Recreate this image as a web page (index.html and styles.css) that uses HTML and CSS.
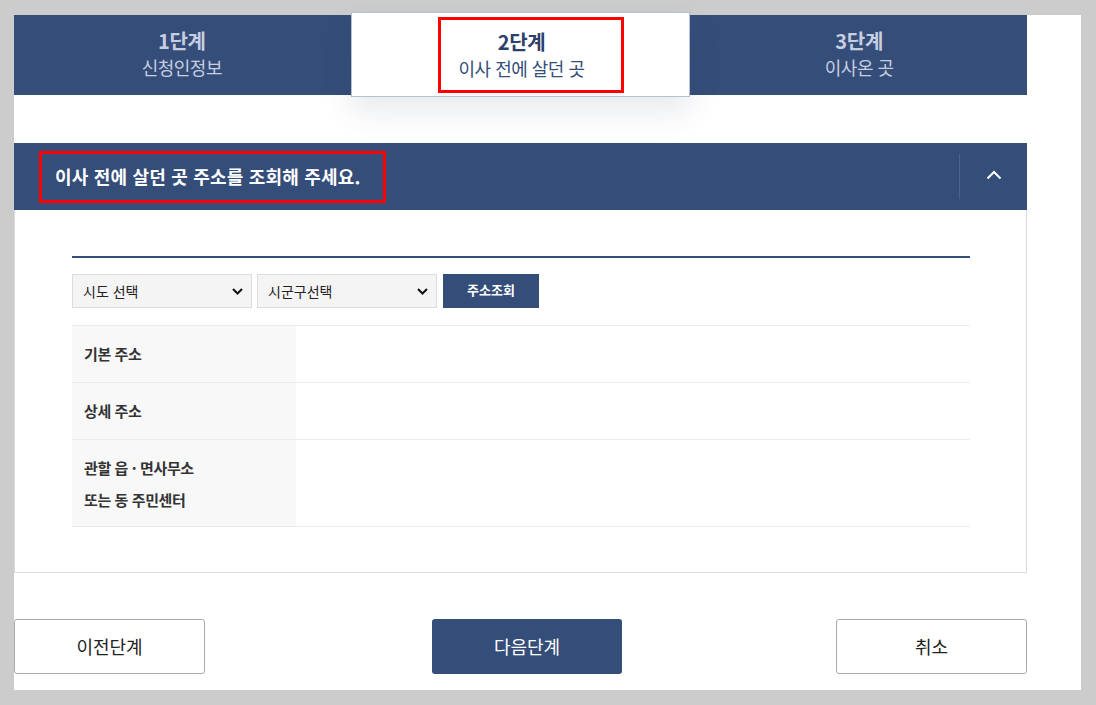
FILE: index.html
```html
<!DOCTYPE html>
<html lang="ko">
<head>
<meta charset="utf-8">
<title>이사 전에 살던 곳</title>
<link rel="stylesheet" href="styles.css">
</head>
<body>
<div class="page">
  <div class="steps">
    <div class="step">
      <strong class="step-num">1단계</strong>
      <span class="step-name">신청인정보</span>
    </div>
    <div class="step step-active">
      <strong class="step-num">2단계</strong>
      <span class="step-name">이사 전에 살던 곳</span>
      <span class="mark" aria-hidden="true"></span>
    </div>
    <div class="step">
      <strong class="step-num">3단계</strong>
      <span class="step-name">이사온 곳</span>
    </div>
  </div>

  <section class="panel">
    <header class="panel-head">
      <h2 class="panel-title"><span class="mark-title">이사 전에 살던 곳 주소를 조회해 주세요.</span></h2>
      <button class="toggle" type="button" aria-label="접기">
        <svg width="16" height="10" viewBox="0 0 16 10"><path d="M1.5 8.5 L8 2 L14.5 8.5" fill="none" stroke="#fff" stroke-width="2"/></svg>
      </button>
    </header>
    <div class="panel-body">
      <div class="search">
        <div class="select">
          <span>시도 선택</span>
          <svg width="11" height="7" viewBox="0 0 11 7"><path d="M1 1 L5.5 5.5 L10 1" fill="none" stroke="#111" stroke-width="2"/></svg>
        </div>
        <div class="select">
          <span>시군구선택</span>
          <svg width="11" height="7" viewBox="0 0 11 7"><path d="M1 1 L5.5 5.5 L10 1" fill="none" stroke="#111" stroke-width="2"/></svg>
        </div>
        <button class="btn-search" type="button">주소조회</button>
      </div>
      <div class="table">
        <div class="row">
          <div class="th">기본 주소</div>
          <div class="td"></div>
        </div>
        <div class="row">
          <div class="th">상세 주소</div>
          <div class="td"></div>
        </div>
        <div class="row row-tall">
          <div class="th">관할 읍 · 면사무소<br>또는 동 주민센터</div>
          <div class="td"></div>
        </div>
      </div>
    </div>
  </section>

  <div class="actions">
    <button class="btn btn-line" type="button">이전단계</button>
    <button class="btn btn-fill" type="button">다음단계</button>
    <button class="btn btn-line" type="button">취소</button>
  </div>
</div>
</body>
</html>
```

FILE: styles.css
```css
* { box-sizing: border-box; }
html, body { margin: 0; padding: 0; }
body {
  background: #cccccc;
  font-family: "Noto Sans CJK KR", "Noto Sans", sans-serif;
  color: #222;
  height: 705px;
  overflow: hidden;
}
.page {
  margin: 15px 0 0 14px;
  width: 1067px;
  height: 675px;
  background: #fff;
  padding-right: 54px;
}
.steps {
  display: flex;
  height: 80px;
  background: #344d79;
}
.step {
  flex: 1;
  display: flex;
  flex-direction: column;
  align-items: center;
  justify-content: center;
  color: #c6cee0;
  padding-bottom: 2px;
}
.step-num {
  font-size: 20px;
  font-weight: 700;
  line-height: 26px;
  letter-spacing: -0.3px;
}
.step-name {
  font-size: 18px;
  line-height: 26px;
  letter-spacing: -0.5px;
}
.step-active {
  background: #fff;
  margin: -3px 1px -2px;
  border: 1px solid #b8c0cf;
  box-shadow: 0 14px 30px rgba(60, 75, 110, 0.12);
  color: #344d79;
  padding: 0 0 0 2px;
  position: relative;
  z-index: 1;
}
.step-active .step-num { color: #2c416b; }
.mark {
  position: absolute;
  left: 86px;
  top: 4px;
  width: 186px;
  height: 76px;
  border: 3px solid #ff0000;
}
.panel {
  margin-top: 48px;
  border: 1px solid #dcdcdc;
  border-top: 0;
}
.panel-head {
  display: flex;
  align-items: center;
  height: 67px;
  background: #344d79;
  margin: 0 -1px;
  padding-left: 25px;
}
.panel-title {
  flex: 1;
  margin: 0;
  font-size: 18px;
  font-weight: 700;
  color: #fff;
  letter-spacing: 0.2px;
}
.mark-title {
  display: inline-block;
  border: 3px solid #ff0000;
  padding: 9px 22px 11px 13px;
}
.toggle {
  width: 68px;
  height: 45px;
  border: 0;
  border-left: 1px solid #4c6391;
  background: transparent;
  display: flex;
  align-items: center;
  justify-content: center;
  padding: 0 0 4px;
}
.panel-body {
  padding: 46px 56px 45px 57px;
}
.search {
  border-top: 2px solid #344d79;
  padding-top: 16px;
  display: flex;
  gap: 5px;
  padding-bottom: 17px;
}
.select {
  width: 180px;
  height: 34px;
  background: #f4f4f4;
  border: 1px solid #dddddd;
  display: flex;
  align-items: center;
  justify-content: space-between;
  padding: 0 8px 0 10px;
  font-size: 14px;
  color: #222;
}
.btn-search {
  width: 96px;
  height: 34px;
  margin-left: 1px;
  background: #344d79;
  color: #fff;
  border: 0;
  font-family: inherit;
  font-size: 13px;
  font-weight: 700;
  padding-bottom: 4px;
}
.table {
  border-top: 1px solid #ebebeb;
}
.row {
  display: flex;
  height: 57px;
  border-bottom: 1px solid #ebebeb;
}
.row-tall { height: 87px; }
.th {
  width: 224px;
  background: #f8f8f8;
  display: flex;
  align-items: center;
  padding-left: 12px;
  font-size: 15px;
  font-weight: 700;
  color: #333;
  line-height: 32px;
  letter-spacing: -0.4px;
}
.row-tall .th { padding-top: 2px; }
.td { flex: 1; }
.actions {
  display: flex;
  margin-top: 46px;
}
.btn {
  width: 191px;
  height: 55px;
  border-radius: 3px;
  font-family: inherit;
  font-size: 18px;
  padding-bottom: 3px;
}
.btn-fill { margin: 0 auto 0 227px; width: 190px; }
.btn-line {
  background: #fff;
  border: 1px solid #aaaaaa;
  color: #222;
}
.btn-fill {
  background: #344d79;
  border: 0;
  color: #fff;
}
```
